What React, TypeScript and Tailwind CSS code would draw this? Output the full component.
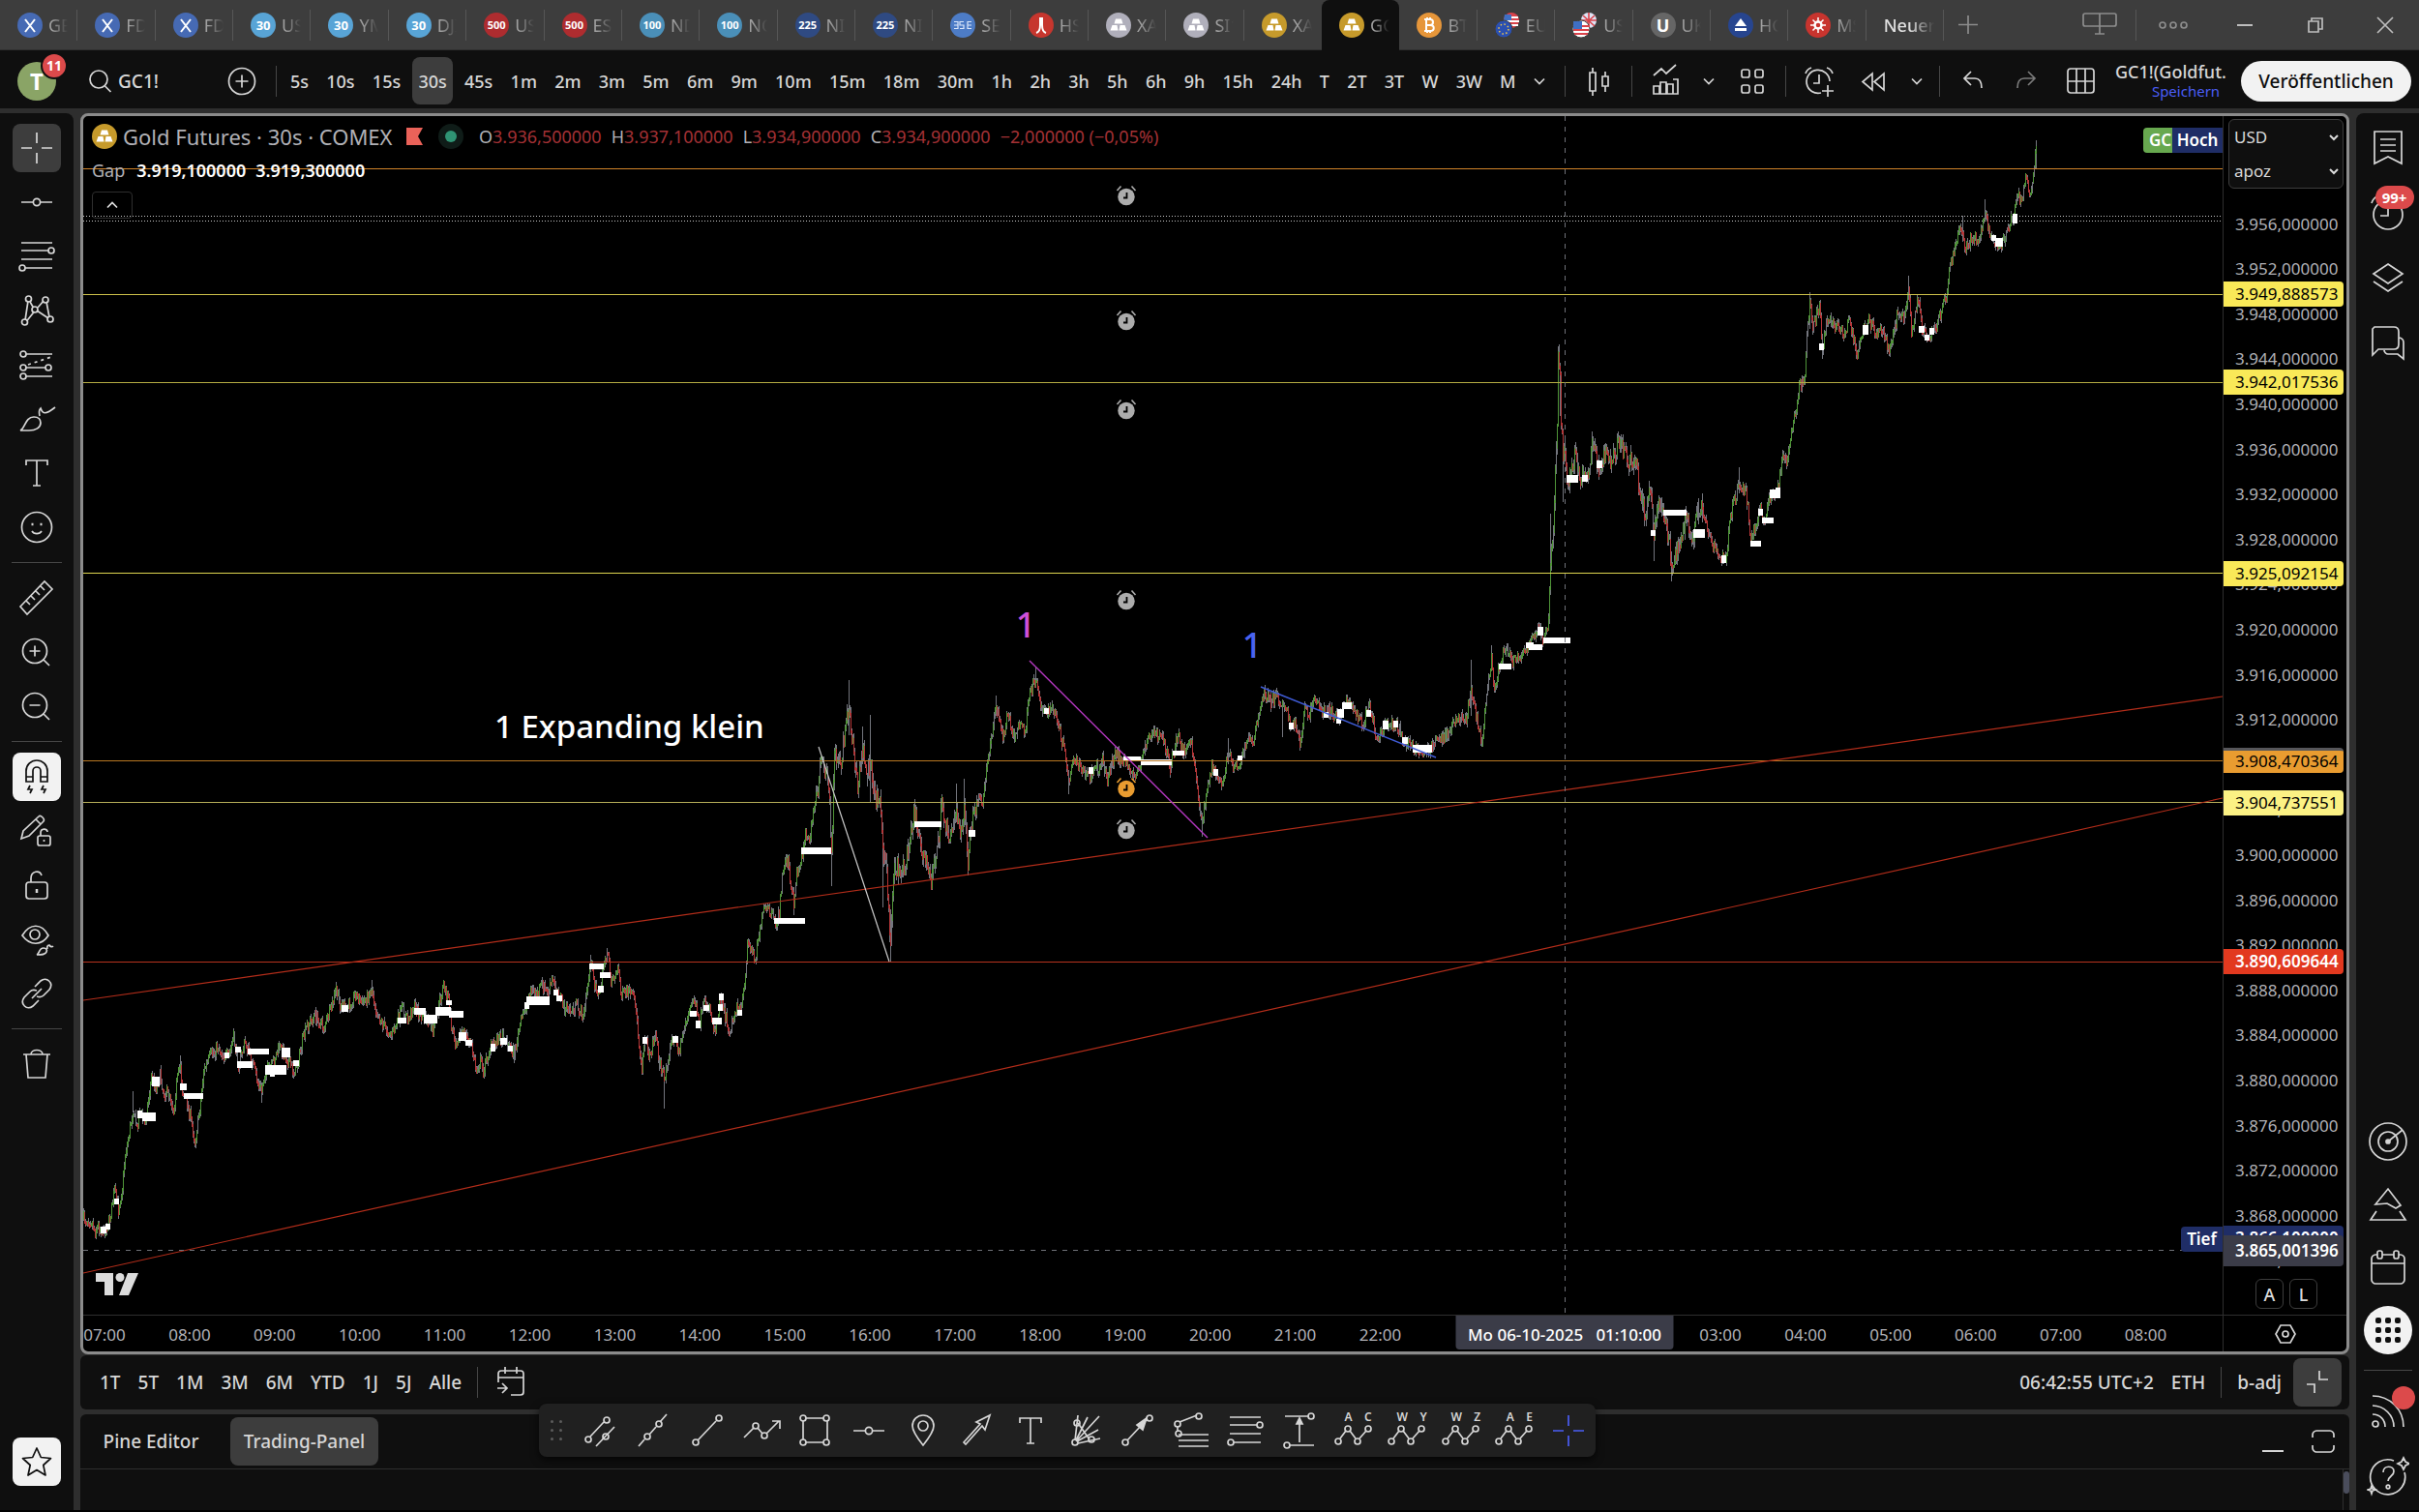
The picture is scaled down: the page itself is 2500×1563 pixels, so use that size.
import type { ReactNode } from 'react';
import clsx from 'clsx';

/* ---------- chart data ---------- */

// canvas window of the pane, in chart units
const PANE = { x: 86, y: 120, w: 2211, h: 1239 };

const topOf = (y: number) => `${((y - PANE.y) / PANE.h) * 100}%`;
const leftOf = (x: number) => `${((x - PANE.x) / PANE.w) * 100}%`;
const priceY = (p: number) => 231.5 + (3956 - p) * 11.65;

// x, y pairs the price walks through
const walk = [
  85, 1260, 94, 1262, 98, 1273, 101, 1267, 107, 1273, 112, 1263, 115, 1250, 118, 1230, 122, 1250, 126, 1227, 129, 1193,
  134, 1167, 137, 1147, 141, 1167, 144, 1147, 149, 1162, 153, 1137, 156, 1113, 161, 1123, 165, 1112, 169, 1130, 175, 1130,
  179, 1148, 182, 1120, 186, 1100, 188, 1127, 193, 1140, 198, 1163, 201, 1180, 206, 1147, 210, 1107, 218, 1090, 225, 1082,
  230, 1090, 236, 1092, 241, 1073, 246, 1100, 253, 1077, 261, 1100, 267, 1123, 270, 1127, 274, 1107, 280, 1103, 288, 1082,
  294, 1090, 303, 1108, 307, 1100, 312, 1077, 317, 1060, 325, 1050, 334, 1062, 342, 1043, 347, 1022, 350, 1037, 358, 1043,
  367, 1027, 374, 1038, 384, 1023, 389, 1047, 396, 1060, 405, 1070, 415, 1043, 421, 1055, 427, 1040, 433, 1048, 441, 1055,
  447, 1067, 453, 1040, 458, 1018, 463, 1033, 466, 1060, 470, 1077, 477, 1067, 486, 1078, 492, 1107, 496, 1097, 499, 1107,
  506, 1083, 514, 1073, 521, 1073, 531, 1090, 537, 1060, 543, 1040, 548, 1023, 555, 1027, 560, 1018, 566, 1028, 570, 1013,
  578, 1028, 583, 1043, 590, 1045, 595, 1040, 603, 1050, 607, 1017, 610, 993, 613, 1013, 619, 1030, 625, 988, 629, 992,
  631, 1013, 639, 1003, 642, 1030, 648, 1025, 656, 1035, 659, 1070, 663, 1103, 666, 1070, 671, 1093, 677, 1067, 681, 1097,
  686, 1117, 690, 1093, 695, 1073, 702, 1085, 708, 1057, 713, 1043, 717, 1033, 722, 1060, 728, 1037, 733, 1040, 738, 1067,
  745, 1027, 749, 1050, 754, 1067, 761, 1037, 765, 1047, 769, 1020, 772, 973, 776, 983, 780, 990, 785, 957, 790, 940,
  797, 945, 801, 957, 805, 943, 809, 897, 814, 887, 816, 913, 820, 933, 823, 903, 828, 887, 832, 860, 836, 870, 841, 833,
  845, 817, 847, 780, 852, 800, 856, 807, 859, 883, 862, 780, 869, 787, 873, 753, 877, 730, 882, 780, 886, 817, 891, 773,
  895, 803, 899, 787, 904, 827, 909, 817, 912, 883, 916, 900, 920, 977, 923, 900, 929, 897, 935, 900, 939, 870, 944, 840,
  949, 860, 954, 883, 962, 910, 967, 887, 973, 833, 980, 863, 988, 843, 992, 867, 996, 833, 1000, 890, 1004, 853,
  1010, 827, 1015, 830, 1020, 790, 1024, 760, 1029, 730, 1036, 763, 1041, 737, 1048, 763, 1054, 747, 1059, 757, 1064, 717,
  1070, 700, 1075, 727, 1081, 740, 1087, 730, 1093, 750, 1099, 773, 1104, 807, 1110, 787, 1115, 793, 1120, 800, 1126, 803,
  1132, 790, 1135, 797, 1138, 783, 1144, 807, 1148, 790, 1153, 780, 1161, 787, 1171, 800, 1177, 797, 1183, 770, 1189, 760,
  1201, 760, 1209, 793, 1217, 760, 1223, 777, 1231, 770, 1235, 797, 1238, 827, 1242, 850, 1246, 820, 1252, 793, 1263, 813,
  1269, 777, 1275, 793, 1282, 787, 1288, 767, 1296, 763, 1301, 737, 1306, 717, 1313, 725, 1319, 720, 1326, 727, 1334, 750,
  1339, 750, 1343, 767, 1348, 733, 1352, 743, 1356, 723, 1361, 723, 1365, 738, 1372, 733, 1383, 743, 1393, 723, 1400, 733,
  1408, 750, 1415, 727, 1422, 763, 1431, 750, 1443, 747, 1450, 767, 1459, 772, 1474, 777, 1485, 767, 1495, 760, 1505, 743,
  1515, 743, 1520, 710, 1525, 740, 1531, 767, 1536, 717, 1541, 680, 1544, 717, 1548, 690, 1556, 669, 1563, 684, 1574, 675,
  1585, 659, 1590, 648, 1595, 662, 1600, 641, 1602, 580, 1605, 551, 1607, 491, 1609, 434, 1610, 373, 1612, 387, 1613, 434,
  1615, 469, 1617, 466, 1619, 501, 1627, 473, 1634, 494, 1641, 487, 1645, 462, 1652, 484, 1659, 469, 1665, 480, 1673, 457,
  1681, 476, 1690, 473, 1694, 512, 1701, 534, 1705, 509, 1709, 548, 1713, 523, 1721, 534, 1727, 584, 1732, 569, 1737, 562,
  1742, 530, 1748, 566, 1753, 534, 1759, 526, 1766, 555, 1774, 573, 1783, 580, 1788, 534, 1792, 516, 1797, 505, 1804, 505,
  1809, 559, 1814, 541, 1819, 526, 1823, 541, 1828, 516, 1837, 505, 1842, 473, 1847, 476, 1850, 451, 1855, 430, 1859, 401,
  1865, 391, 1867, 344, 1870, 312, 1873, 341, 1880, 316, 1883, 362, 1887, 330, 1897, 337, 1904, 344, 1911, 334, 1919, 366,
  1926, 341, 1931, 330, 1938, 344, 1946, 344, 1951, 362, 1955, 351, 1961, 323, 1967, 326, 1972, 301, 1975, 341, 1982, 309,
  1986, 341, 1992, 350, 2000, 341, 2007, 316, 2011, 305, 2015, 276, 2020, 255, 2025, 234, 2031, 259, 2037, 244, 2042, 248,
  2047, 241, 2051, 216, 2056, 244, 2065, 257, 2071, 244, 2076, 234, 2080, 223, 2085, 201, 2089, 212, 2093, 184, 2098, 201,
  2101, 176, 2104, 155,
];

// x, high, low
const spikes = [
  [137, 1128, 1150], [186, 1091, 1110], [270, 1120, 1140], [347, 1016, 1030], [384, 1013, 1030], [610, 987, 1005], [686, 1110, 1146],
  [820, 930, 946], [859, 860, 916], [877, 703, 760], [891, 751, 790], [899, 739, 830], [912, 850, 938], [920, 940, 994],
  [988, 810, 850], [996, 805, 850], [1000, 870, 902], [1029, 719, 740], [1070, 690, 710], [1104, 800, 821], [1242, 840, 865],
  [1269, 763, 790], [1306, 712, 725], [1325, 725, 762], [1343, 755, 776], [1520, 682, 740], [1541, 667, 690], [1602, 531, 590],
  [1610, 358, 420], [1612, 380, 430], [1615, 450, 519], [1645, 446, 480], [1709, 540, 580], [1727, 570, 601], [1759, 510, 540],
  [1797, 483, 510], [1870, 302, 340], [1883, 350, 371], [1972, 285, 310], [2028, 223, 250], [2051, 206, 225], [2104, 145, 175],
];

// x, y, width, height of the open gaps
const gaps = [
  [104, 1268, 6, 7], [109, 1265, 5, 6], [118, 1239, 5, 6], [142, 1148, 5, 8], [147, 1150, 14, 9], [157, 1113, 8, 10],
  [186, 1120, 7, 7], [190, 1130, 20, 6], [232, 1088, 5, 6], [243, 1082, 6, 6], [245, 1097, 16, 7], [256, 1084, 22, 6],
  [274, 1101, 22, 10], [279, 1110, 5, 3], [291, 1083, 9, 10], [303, 1096, 6, 6], [353, 1039, 7, 7], [411, 1052, 9, 6],
  [428, 1042, 12, 7], [438, 1049, 14, 9], [450, 1041, 16, 9], [461, 1034, 6, 5], [464, 1045, 15, 7], [474, 1067, 8, 9],
  [481, 1075, 7, 6], [507, 1079, 5, 8], [517, 1073, 7, 7], [525, 1081, 5, 6], [542, 1036, 5, 7], [544, 1030, 24, 9],
  [572, 1023, 5, 6], [575, 1029, 6, 6], [609, 996, 15, 6], [620, 1005, 11, 6], [618, 1019, 6, 7], [664, 1072, 5, 7],
  [695, 1071, 6, 7], [713, 1045, 7, 6], [719, 1055, 5, 8], [727, 1039, 6, 6], [736, 1052, 10, 7], [742, 1038, 5, 7],
  [743, 1027, 5, 7], [762, 1044, 5, 6], [800, 949, 32, 6], [828, 876, 31, 7], [945, 849, 28, 6], [1001, 858, 7, 7],
  [1079, 732, 5, 6], [1125, 793, 5, 7], [1161, 782, 18, 5], [1179, 785, 32, 6], [1212, 776, 12, 5], [1254, 795, 5, 7],
  [1279, 781, 5, 6], [1332, 747, 5, 7], [1368, 736, 5, 6], [1382, 733, 7, 9], [1381, 743, 5, 5], [1387, 726, 10, 7],
  [1412, 734, 5, 7], [1429, 745, 6, 9], [1440, 745, 5, 7], [1449, 762, 6, 7], [1460, 770, 20, 8], [1549, 686, 13, 6],
  [1577, 664, 8, 6], [1580, 666, 14, 6], [1589, 648, 6, 9], [1595, 659, 28, 6], [1619, 491, 12, 8], [1635, 491, 6, 7],
  [1650, 476, 6, 8], [1706, 548, 5, 6], [1719, 527, 24, 6], [1750, 547, 12, 9], [1779, 574, 5, 8], [1809, 559, 11, 6],
  [1817, 526, 5, 7], [1821, 535, 12, 6], [1829, 506, 11, 9], [1835, 504, 5, 4], [1880, 355, 5, 7], [1925, 336, 6, 10],
  [1983, 337, 6, 7], [1989, 346, 5, 6], [1994, 339, 5, 7], [2058, 243, 5, 6], [2062, 246, 8, 9], [2080, 221, 5, 10],
];

function buildCandles() {
  let seed = 7;
  const rnd = () => {
    seed = (seed * 16807) % 2147483647;
    return seed / 2147483647;
  };
  const out = { wick: '', up: '', down: '' };
  let prev = walk[1];
  let i = 0;
  for (let x = 86; x <= 2104; x++) {
    while (i < walk.length - 4 && walk[i + 2] < x) i += 2;
    const t = (x - walk[i]) / (walk[i + 2] - walk[i]);
    const base = walk[i + 1] + (walk[i + 3] - walk[i + 1]) * t;
    const wild = (x > 840 && x < 1010) || (x > 1600 && x < 1760) ? 1.8 : 1.1;
    const y = base + (rnd() - 0.5) * 11 * wild;
    const hi = Math.min(prev, y) - rnd() * 5 * wild;
    const lo = Math.max(prev, y) + rnd() * 5 * wild;
    out.wick += `M${x + 0.5} ${hi.toFixed(0)}V${lo.toFixed(0)}`;
    if (rnd() > 0.15) {
      out[y < prev ? 'up' : 'down'] += `M${x + 0.5} ${(prev + (y < prev ? 1 : -1)).toFixed(0)}V${(y + (y < prev ? -2 : 2)).toFixed(0)}`;
    }
    prev = y;
  }
  spikes.forEach(([x, a, b]) => (out.wick += `M${x + 0.5} ${a}V${b}`));
  return out;
}

const candles = buildCandles();

const levels = [
  { y: 174, color: '#d18429' },
  { y: 304, color: '#ccc04a' },
  { y: 395, color: '#b5ac42' },
  { y: 592, color: '#dfd550' },
  { y: 786, color: '#b87722' },
  { y: 829, color: '#b5ad58' },
  { y: 994, color: '#b8321e' },
];

const ticks = Array.from({ length: 24 }, (_, i) => 3956 - i * 4);

const tags = [
  { price: 3949.888573, cls: 'bg-[#f9e958] text-black' },
  { price: 3942.017536, cls: 'bg-[#f9e958] text-black' },
  { price: 3925.092154, cls: 'bg-[#f9e958] text-black' },
  { price: 3908.470364, cls: 'border-t-3 border-[#56565a] bg-[#e99c30] pb-px text-black' },
  { price: 3904.737551, cls: 'bg-[#fbf184] text-black' },
  { price: 3890.609644, cls: 'bg-[#e2391f] font-semibold text-white' },
  { price: 3866.1, cls: 'bg-[#1f2d66] font-semibold text-white' },
];

const hours = [
  '07:00', '08:00', '09:00', '10:00', '11:00', '12:00', '13:00', '14:00', '15:00', '16:00', '17:00', '18:00', '19:00',
  '20:00', '21:00', '22:00', '', '', '', '03:00', '04:00', '05:00', '06:00', '07:00', '08:00',
];

const fmt = (p: number) => {
  const [int, dec] = p.toFixed(6).split('.');
  return `${int[0]}.${int.slice(1)},${dec}`;
};

/* ---------- icons ---------- */

function Ico({ children, className = '' }: { children: ReactNode; className?: string }) {
  return (
    <svg viewBox="0 0 44 44" className={clsx('h-11 w-11 shrink-0', className)} fill="none" stroke="currentColor" strokeWidth="1.7" aria-hidden="true">
      {children}
    </svg>
  );
}

const dot = (x: number, y: number, r = 3) => <circle key={`${x}-${y}`} cx={x} cy={y} r={r} />;

const Chevron = () => (
  <svg viewBox="0 0 14 10" className="h-2.5 w-3.5" fill="none" stroke="currentColor" strokeWidth="1.7" aria-hidden="true">
    <path d="M2 2.5l5 5 5-5" />
  </svg>
);

const icons: Record<string, ReactNode> = {
  cross: <path d="M6 22h11M27 22h11M22 6v11M22 27v11" />,
  hline: <><path d="M6 22h12M26 22h12" />{dot(22, 22, 3.6)}</>,
  fib: <><path d="M6 8h32M6 16h28M6 25h32M10 34h28" />{dot(37, 16)}{dot(7, 34)}</>,
  pattern: <><path d="M13 12l-3 20M15 13l3.500 6M11.500 33l8-10M23 19l6-7M32 13l3 16M34 30l-12-8" />{dot(13.5, 10)}{dot(31, 11)}{dot(9.500, 34)}{dot(36, 31)}{dot(20, 21)}</>,
  forecast: <><path d="M11 11h27M11 25h20M11 34h27" /><path d="M13 22l24-8" strokeDasharray="3 4" />{dot(8, 11)}{dot(8, 25)}{dot(8, 34)}{dot(34, 25)}</>,
  brush: <><path d="M5 34c5-2 5-14 14-14 5 0 7 3 7 6 0 5-5 8-12 8z" /><path d="M25 19c-1-4-1-6 1-8 2 6 5 7 15-1" /></>,
  text: <path d="M11 14V9h22v5M22 9v26M18 35h8" />,
  smile: <><circle cx="22" cy="22" r="15.500" /><path d="M17 26c2 3.500 8 3.500 10 0" /><path d="M16.500 19h2M25.500 19h2" strokeWidth="2.5" /></>,
  ruler: <path d="M5 31L30 5l8 8-26 26zM11 25l4 4M16 20l4 4M21 15l4 4M26 10l4 4" />,
  zoomIn: <><circle cx="20" cy="21" r="12.500" /><path d="M29 30l6 6M20 15.500v11M14.500 21h11" /></>,
  zoomOut: <><circle cx="20" cy="21" r="12.500" /><path d="M29 30l6 6M14.500 21h11" /></>,
  magnet: <><path d="M11 27V16a11 11 0 0 1 22 0v11h-7V16a4 4 0 0 0-8 0v11zM11 22h7M26 22h7" /><path d="M15 31l-2 4h4l-2 4M29 31l-2 4h4l-2 4" /></>,
  pencilLock: <><path d="M6 30l2-8L24 7c2-2 7 3 5 5L14 27zM21 10l5 5" /><rect x="23" y="27" width="13" height="10" rx="2" /><path d="M26 27v-3c0-5 7-5 7-1M29.500 31v2" /></>,
  lock: <><rect x="11" y="19" width="22" height="17" rx="3" /><path d="M16 19v-4c0-8 9-9 11-3" /><path d="M22 26v4" strokeWidth="2.5" /></>,
  eye: <><path d="M7 18c8-13 20-13 27 0-7 11-19 11-27 0z" /><circle cx="20" cy="17" r="5" /><path d="M22 38c3-1 2-7 7-7 3 0 4 2 3 4-1 3-5 3-10 3zM33 32c-1-3 1-4 2-4 1 2 3 2 4 1" /></>,
  link: <path d="M20 15l6-6c6-5 14 2 9 9l-6 6c-2 2-4 2-7 1M24 29l-6 6c-6 5-14-2-9-9l6-6c2-2 4-2 7-1M17 27L27 17" />,
  trash: <path d="M8 12h28M16 12c0-6 12-6 12 0M11 12l2 24h18l2-24" />,
  star: <path d="M22 8l4.300 9.500 10.200 1-7.700 7 2.200 10.500-9-5.500-9 5.500 2.200-10.500-7.700-7 10.200-1z" strokeLinejoin="round" />,
  search: <><circle cx="20" cy="20" r="9" /><path d="M26.500 27l6 6" /></>,
  plusCircle: <><circle cx="22" cy="22" r="13.500" /><path d="M22 15.500v13M15.500 22h13" /></>,
  candle: <path d="M13 13h6v19h-6zM16 8v5M16 32v5M26 17h6v10h-6zM29 12v5M29 27v6" />,
  indicators: <path d="M10 16l8-7 5 5 10-9M10 27h6v8h-6zM17 23h6v12h-6zM24 25h6v10h-6zM30 20h5v15h-5" />,
  squares: <><rect x="11" y="10" width="8" height="8" rx="2" /><rect x="25" y="10" width="8" height="8" rx="2" /><rect x="11" y="26" width="8" height="8" rx="2" /><rect x="25" y="26" width="8" height="8" rx="2" /></>,
  alarmPlus: <><path d="M33 22a12 12 0 1 0-9 12M22 15v9h-6M8 14c1-3 3-5 6-6M36 14c-1-3-3-5-6-6M31 26v12M25 32h12" /></>,
  rewind: <path d="M21 14v17l-10-8.500zM33 14v17l-10-8.500z" />,
  undo: <path d="M20 12l-7 7 7 7M14 19h10c5 0 7 4 7 10" />,
  redo: <path d="M24 12l7 7-7 7M30 19H20c-5 0-7 4-7 10" />,
  layout: <><rect x="8" y="9" width="27" height="25" rx="3" /><path d="M17 9v25M26 9v25M8 22h27" /></>,
  list: <path d="M8 5h28v33l-14-7-14 7zM14 13h16M14 19h16M14 25h16" />,
  alarm: <><circle cx="22" cy="24" r="15" /><path d="M22 15v10h-8M5 12c1-3 3-6 6-7" /></>,
  layers: <path d="M22 8l15 10-15 10L7 18zM7 26l15 10 15-10" />,
  chat: <path d="M8 6h20c3 0 5 2 5 5v13c0 3-2 5-5 5H12l-6 6V8zM34 17c3 1 4 3 4 5v17l-6-5H22c-2 0-4-2-4-4" />,
  radar: <><circle cx="22" cy="22" r="19" /><circle cx="22" cy="22" r="10" /><circle cx="22" cy="22" r="2" fill="currentColor" /><path d="M22 22L37 10" /></>,
  peak: <path d="M9 22L22 6l13 17-5 3-9-5zM10 29l-6 9h36l-6-9" />,
  calendar: <><path d="M11 9H9c-2 0-4 2-4 4v22c0 2 2 4 4 4h26c2 0 4-2 4-4V13c0-2-2-4-4-4h-2M16 9h12M5 18h34" /><rect x="11" y="5" width="5" height="8" rx="2" /><rect x="28" y="5" width="5" height="8" rx="2" /></>,
  rss: <><path d="M6 6c18 0 32 14 32 32M6 16c12 0 22 10 22 22M6 25c8 0 13 6 13 13" />{dot(9, 35)}</>,
  help: <><path d="M28 5a18 18 0 1 0 11 12M17 17c0-8 11-7 11-1 0 5-6 5-6 10" />{dot(22, 32, 1.800)}<path d="M38 2l2 4 4 2-4 2-2 4-2-4-4-2 4-2zM5 31l1 3 3 1-3 1-1 3-1-3-3-1 3-1z" fill="#0f0f0f" /></>,
  goto: <path d="M9 22v-9c0-2 1-3 3-3h20c2 0 3 1 3 3v19c0 2-1 3-3 3H22M9 17h26M16 6v7M28 6v7M8 28h9M13 23l5 5-5 5" />,
  collapse: <path d="M24 10v9h9M11 24h8v9" />,
  maximize: <path d="M11 18v-3c0-2 2-4 4-4h14c2 0 4 2 4 4v3M11 26v3c0 2 2 4 4 4h14c2 0 4-2 4-4v-3" />,
  minimize: <path d="M11 32h22" strokeWidth="2" />,
  hexagon: <><path d="M17 13h10l5 9-5 9H17l-5-9z" /><circle cx="22" cy="22" r="3" /></>,
};

const drawTools: [string, ReactNode][] = [
  ['Paralleler Kanal', <><path d="M12 28L26 13M18 38l19-20" />{dot(10, 31)}{dot(29, 11)}{dot(28, 28)}</>],
  ['Erweiterte Linie', <><path d="M7 38l6-7M18 26l7-8M29 13l7-8" />{dot(16, 28)}{dot(28, 15)}</>],
  ['Trendlinie', <><path d="M12 32L31 12" />{dot(10, 34)}{dot(34, 9)}</>],
  ['Pfad', <><path d="M4 29l10-10M18 19l5 6M27 25L40 12M33 12h8v8" />{dot(16, 17)}{dot(25, 27)}</>],
  ['Rechteck', <><path d="M13 9h18M35 12v19M31 34H13M10 31V12" />{dot(10, 9)}{dot(34, 9)}{dot(10, 34)}{dot(34, 34)}</>],
  ['Horizontale Linie', icons.hline],
  ['Nadel', <><path d="M22 37C14 27 11 21 11 17a11 11 0 0 1 22 0c0 4-3 10-11 20z" /><circle cx="22" cy="17" r="5" /></>],
  ['Pfeilmarker', <path d="M9 34l17-19-4-2 14-7-5 15-3-4-17 19z" />],
  ['Text', icons.text],
  ['Gann-Fächer', <><path d="M13 32L16 6M14 32L26 8M14 33L38 7M15 33l22-12M16 35l23-5M16 14l12 17" />{dot(13, 34)}{dot(15, 14)}{dot(30, 31)}</>],
  ['Pfeil', <><path d="M11 32l14-15M31 9l-10 7 6 5z" fill="currentColor" />{dot(9, 34)}{dot(34, 9)}</>],
  ['Fib-Extension', <><path d="M9 13l18-7M7 17v6M8 26h31M8 32h31M8 38h31" />{dot(7, 15)}{dot(29, 7)}{dot(8, 25)}</>],
  ['Fib-Retracement', icons.fib],
  ['Preisspanne', <><path d="M7 7h25M11 37h26M22 34V13" /><path d="M22 9l-3 6h6z" fill="currentColor" />{dot(34, 7)}{dot(9, 37)}</>],
];

const waveTools = ['A C', 'W Y', 'W Z', 'A E'];

const sideGroups = [
  [['Fadenkreuz', 'cross'], ['Linien', 'hline'], ['Fibonacci', 'fib'], ['Muster', 'pattern'], ['Prognose', 'forecast'], ['Pinsel', 'brush'], ['Text', 'text'], ['Symbole', 'smile']],
  [['Messen', 'ruler'], ['Vergrößern', 'zoomIn'], ['Verkleinern', 'zoomOut']],
  [['Magnet', 'magnet'], ['Zeichenmodus', 'pencilLock'], ['Sperren', 'lock'], ['Ausblenden', 'eye'], ['Verknüpfen', 'link']],
  [['Löschen', 'trash']],
];

/* ---------- tab bar ---------- */

const bars = <path d="M10 6.500h6l1.500 5h-9zM6.500 13h5l1 5.500H4.500zM14.500 13h5l2 5.500h-8z" fill="#fff" />;

type Tab = { label: string; bg: string; mark?: string; art?: ReactNode };

const flags = (a: string, b: string, usFront: boolean) => (
  <>
    <circle cx="17" cy="8" r="8" fill={b} />
    {usFront ? (
      <path d="M9 8h16M17 0v16M11 3l12 11M23 3L11 14" stroke="#d9434b" strokeWidth="1.6" />
    ) : (
      <>
        <path d="M10 5h14M9 9h16M10 13h14" stroke="#fff" strokeWidth="2" />
        <path d="M10 2h7v6H9z" fill="#3f6fc4" />
      </>
    )}
    <circle cx="9" cy="17" r="9" fill={a} stroke="#3d3d3d" strokeWidth="1" />
    {usFront ? (
      <>
        <path d="M1 18h16M2 22h14M9 14h9" stroke="#d9434b" strokeWidth="2" />
        <path d="M1 9h9v8H1z" fill="#3f6fc4" />
      </>
    ) : (
      <circle cx="9" cy="17" r="5" fill="none" stroke="#f2c94c" strokeWidth="1.5" strokeDasharray="1.500 2.400" />
    )}
  </>
);

const tabs: Tab[] = [
  { label: 'GER', bg: 'bg-[#466ab4]', art: <path d="M8 7l10 13M18 7L8 20" stroke="#fff" strokeWidth="2" /> },
  { label: 'FDX', bg: 'bg-[#466ab4]', art: <path d="M8 7l10 13M18 7L8 20" stroke="#fff" strokeWidth="2" /> },
  { label: 'FDX', bg: 'bg-[#466ab4]', art: <path d="M8 7l10 13M18 7L8 20" stroke="#fff" strokeWidth="2" /> },
  { label: 'US3', bg: 'bg-[#58a4d6]', mark: '30' },
  { label: 'YM1', bg: 'bg-[#58a4d6]', mark: '30' },
  { label: 'DJI', bg: 'bg-[#58a4d6]', mark: '30' },
  { label: 'US5', bg: 'bg-[#ae2c2f]', mark: '500' },
  { label: 'ES1', bg: 'bg-[#ae2c2f]', mark: '500' },
  { label: 'NDX', bg: 'bg-[#4a8fb8]', mark: '100' },
  { label: 'NQ1', bg: 'bg-[#4a8fb8]', mark: '100' },
  { label: 'NI2', bg: 'bg-[#2f4a82]', mark: '225' },
  { label: 'NIY', bg: 'bg-[#2f4a82]', mark: '225' },
  { label: 'SEN', bg: 'bg-[#4d7cc6]', art: <path d="M4 9.500h4v7H4M4 13h4M14 9.500h-4v3.500h4v3.500h-4M22 9.500h-4v7h4M18 13h4" stroke="#dbe7fb" strokeWidth="1.2" /> },
  { label: 'HSI', bg: 'bg-[#c6362e]', art: <path d="M12 5v8c0 4-1 7-4 8M14 5v8c0 4 1 7 4 8" stroke="#fff" strokeWidth="2" /> },
  { label: 'XAG', bg: 'bg-[#b0afbb]', art: bars },
  { label: 'SI1', bg: 'bg-[#b0afbb]', art: bars },
  { label: 'XAU', bg: 'bg-[#c69a2b]', art: bars },
  { label: 'GC1', bg: 'bg-[#c69a2b]', art: bars },
  { label: 'BTC', bg: 'bg-[#e6963a]', art: <path d="M10 7v12M8 7h6c4 0 4 6 0 6h-4M14 13c5 0 5 6 0 6H8M11 5v2M14 5v2M11 19v2M14 19v2" stroke="#fff" strokeWidth="2" /> },
  { label: 'EUR', bg: '', art: flags('#2b50b0', '#d9434b', false) },
  { label: 'USD', bg: '', art: flags('#fff', '#dfe3f5', true) },
  { label: 'UKO', bg: 'bg-[#666]', mark: 'U' },
  { label: 'HG1', bg: 'bg-[#27458f]', art: <path d="M13 6l6 8H7zM7 16h12v3H7z" fill="#fff" /> },
  { label: 'MSC', bg: 'bg-[#c8342e]', art: <><circle cx="13" cy="13" r="3.500" stroke="#fff" strokeWidth="2.5" /><path d="M13 5v4M13 17v4M5 13h4M17 13h4M7.500 7.500l3 3M15.500 15.500l3 3M18.500 7.500l-3 3M7.500 18.500l3-3" stroke="#fff" strokeWidth="1.5" /></> },
];

function TabIcon({ tab }: { tab: Tab }) {
  return (
    <span
      className={clsx(
        'flex h-[26px] w-[26px] shrink-0 items-center justify-center rounded-full font-bold text-white',
        tab.bg,
        tab.mark === 'U' ? 'text-lg' : tab.mark && tab.mark.length === 3 ? 'text-[11px]' : 'text-[13px]',
      )}
    >
      {tab.mark ?? (
        <svg viewBox="0 0 26 26" className="h-[26px] w-[26px]" fill="none" aria-hidden="true">
          {tab.art}
        </svg>
      )}
    </span>
  );
}

function TabBar() {
  return (
    <header className="flex h-[52px] shrink-0 border-b border-[#303030] bg-[#3d3d3d]">
      <nav className="flex min-w-0 flex-1">
        {tabs.map((tab, i) => (
          <button
            key={i}
            className={clsx(
              'relative flex min-w-0 flex-1 items-center gap-1.5 overflow-hidden pl-[18px] text-[#a0a0a0]',
              i === 17 && 'h-[52px] rounded-t-lg bg-[#0f0f0f]',
            )}
          >
            <TabIcon tab={tab} />
            <span className="w-5 overflow-hidden [mask-image:linear-gradient(90deg,#000_20%,transparent)]">{tab.label}</span>
            {i !== 16 && i !== 17 && <span className="absolute top-2.5 right-0 h-8 w-px bg-[#565656]" />}
          </button>
        ))}
        <button className="relative flex min-w-0 flex-1 items-center pl-[18px] font-medium text-[#e0e0e0]">
          <span className="w-13 overflow-hidden whitespace-nowrap [mask-image:linear-gradient(90deg,#000_50%,transparent)]">Neuer Tab</span>
          <span className="absolute top-2.5 right-0 h-8 w-px bg-[#565656]" />
        </button>
      </nav>
      <div className="flex w-[491px] shrink-0 items-center text-[#8c8c8c]">
        <button aria-label="Neuer Tab" className="flex w-[50px] justify-center">
          <Ico><path d="M22 12v19M12 21.500h20" /></Ico>
        </button>
        <button aria-label="Layouts" className="ml-auto flex w-[74px] justify-center">
          <Ico><path d="M5 12c0-1 1-2 2-2h30c1 0 2 1 2 2v9c0 1-1 2-2 2H7c-1 0-2-1-2-2zM22 10v21M17 31h10" /></Ico>
        </button>
        <span className="h-8 w-px bg-[#565656]" />
        <button aria-label="Menü" className="flex w-[76px] justify-center">
          <Ico>{dot(11, 22)}{dot(22, 22)}{dot(33, 22)}</Ico>
        </button>
        <button aria-label="Minimieren" className="flex w-[72px] justify-center text-[#bdbdbd]">
          <Ico><path d="M14 22h16" strokeWidth="2" /></Ico>
        </button>
        <button aria-label="Wiederherstellen" className="flex w-[74px] justify-center text-[#bdbdbd]">
          <Ico><path d="M15 18h10v11H15zM18 18v-3h11v11h-4" /></Ico>
        </button>
        <button aria-label="Schließen" className="flex w-[70px] justify-center text-[#bdbdbd]">
          <Ico><path d="M14 14l16 16M30 14L14 30" /></Ico>
        </button>
      </div>
    </header>
  );
}

/* ---------- toolbar ---------- */

const intervals = [
  '5s', '10s', '15s', '30s', '45s', '1m', '2m', '3m', '5m', '6m', '9m', '10m', '15m', '18m', '30m', '1h', '2h', '3h', '5h',
  '6h', '9h', '15h', '24h', 'T', '2T', '3T', 'W', '3W', 'M',
];

const Sep = () => <span className="h-8 w-px shrink-0 bg-[#464646]" />;

function Tool({ name, label, className }: { name: string; label: string; className: string }) {
  return (
    <button aria-label={label} className={clsx('flex shrink-0 items-center justify-center', className)}>
      <Ico>{icons[name]}</Ico>
    </button>
  );
}

function Toolbar() {
  return (
    <div className="flex h-[60px] shrink-0 items-center bg-[#0f0f0f] pt-[3px]">
      <button className="relative ml-[18px] flex h-10 w-10 items-center justify-center rounded-full bg-[#8aa466] text-2xl font-bold text-white">
        T
        <span className="absolute -top-2.5 -right-3 flex h-7 w-7 items-center justify-center rounded-full border-2 border-[#0f0f0f] bg-[#dc4a4b] text-sm">11</span>
      </button>
      <button className="ml-[24px] flex w-[146px] items-center">
        <Ico>{icons.search}</Ico>
        <span className="-ml-1 text-[19px] font-medium">GC1!</span>
      </button>
      <Tool name="plusCircle" label="Symbol vergleichen" className="w-11" />
      <span className="w-[13px]" />
      <Sep />
      <nav className="flex flex-1 justify-between pr-1.5 pl-2 font-medium">
        {intervals.map((it) => (
          <button key={it} className={clsx('h-[49px] rounded-lg px-1.5', it === '30s' && 'bg-[#3d3d3d]')}>
            {it}
          </button>
        ))}
      </nav>
      <button aria-label="Mehr Intervalle" className="mr-3.5 flex w-[24px] justify-center"><Chevron /></button>
      <Sep />
      <Tool name="candle" label="Kerzen" className="w-[68px]" />
      <Sep />
      <Tool name="indicators" label="Indikatoren" className="w-[68px]" />
      <button aria-label="Favoriten" className="flex w-[22px] justify-center"><Chevron /></button>
      <Tool name="squares" label="Vorlagen" className="w-[68px]" />
      <Sep />
      <Tool name="alarmPlus" label="Alarm" className="w-[68px]" />
      <Tool name="rewind" label="Replay" className="w-[44px]" />
      <button aria-label="Replay-Optionen" className="flex w-[46px] justify-center"><Chevron /></button>
      <Sep />
      <Tool name="undo" label="Rückgängig" className="w-[68px]" />
      <Tool name="redo" label="Wiederholen" className="w-[42px] text-[#7a7a7a]" />
      <Tool name="layout" label="Layout" className="w-[71px]" />
      <button className="flex w-[130px] flex-col items-center overflow-hidden leading-5">
        <span className="w-full overflow-hidden text-left font-medium whitespace-nowrap">GC1!(Goldfut.</span>
        <span className="pl-4 text-[15px] text-[#4a5df5]">Speichern</span>
      </button>
      <button className="mr-2 h-[42px] w-[176px] shrink-0 rounded-full bg-[#f2f2f2] text-[19px] font-medium text-[#0f0f0f]">Veröffentlichen</button>
    </div>
  );
}

function LeftBar() {
  return (
    <aside className="flex w-[76px] shrink-0 flex-col items-center rounded-tr-lg bg-[#0f0f0f] pt-2">
      {sideGroups.map((group, g) => (
        <div key={g} className="flex flex-col items-center">
          {g > 0 && <span className="my-2 h-px w-[52px] bg-[#464646]" />}
          {group.map(([label, name]) => (
            <div key={name} className="flex h-14 items-center">
              <button
                aria-label={label}
                className={clsx(
                  'flex h-[50px] w-[50px] items-center justify-center rounded-lg',
                  name === 'cross' && 'bg-[#3d3d3d]',
                  name === 'magnet' && 'bg-[#f2f2f2] text-[#0f0f0f]',
                )}
              >
                <Ico>{icons[name]}</Ico>
              </button>
            </div>
          ))}
        </div>
      ))}
      <button aria-label="Favoriten-Leiste" className="mt-auto mb-[25px] flex h-[50px] w-[50px] items-center justify-center rounded-lg bg-[#f2f2f2] text-[#0f0f0f]">
        <Ico>{icons.star}</Ico>
      </button>
    </aside>
  );
}

function RightBar() {
  return (
    <aside className="flex w-[65px] shrink-0 flex-col items-center rounded-tl-lg bg-[#0f0f0f] pt-0.5">
      <Tool name="list" label="Watchlist" className="h-[67px]" />
      <div className="relative">
        <Tool name="alarm" label="Alarme" className="h-[67px]" />
        <span className="absolute top-1.5 left-[9px] flex h-6 w-10 items-center justify-center rounded-full bg-[#dc4a4b] text-[15px] font-bold text-white">99+</span>
      </div>
      <Tool name="layers" label="Objektbaum" className="h-[67px]" />
      <Tool name="chat" label="Chats" className="h-[67px]" />
      <div className="mt-auto flex flex-col items-center">
        <Tool name="radar" label="Screener" className="h-[65px]" />
        <Tool name="peak" label="Pine" className="h-[65px]" />
        <Tool name="calendar" label="Kalender" className="h-[65px]" />
        <button aria-label="Produkte" className="mt-2 mb-1.5 grid h-[50px] w-[50px] grid-cols-[6px_6px_6px] place-content-center gap-1 rounded-full bg-[#f2f2f2]">
          {Array.from({ length: 9 }, (_, i) => (
            <span key={i} className="h-1.5 w-1.5 rounded-xs bg-[#0f0f0f]" />
          ))}
        </button>
        <span className="mt-2.5 mb-2 h-px w-[50px] bg-[#464646]" />
        <div className="relative">
          <Tool name="rss" label="News" className="h-[68px]" />
          <span className="absolute top-2 left-[26px] h-6 w-6 rounded-full bg-[#dc4a4b]" />
        </div>
        <Tool name="help" label="Hilfe" className="h-[68px]" />
      </div>
    </aside>
  );
}

/* ---------- chart ---------- */

function AlertClock({ y, color }: { y: number; color: string }) {
  return (
    <svg viewBox="0 0 24 24" className="absolute h-6 w-6 -translate-x-1/2 -translate-y-1/2" style={{ left: leftOf(1164), top: topOf(y - 1), color }} aria-hidden="true">
      <circle cx="12" cy="13.500" r="8.700" fill="currentColor" />
      <path d="M2.500 7l4-4.500M21.500 7l-4-4.500" stroke="currentColor" strokeWidth="1.6" />
      <path d="M12.500 9v5.500H9" fill="none" stroke="#000" strokeWidth="1.8" />
    </svg>
  );
}

function Ohlc() {
  return (
    <div className="flex items-center gap-2.5 text-[#b1b1b6]">
      {[['O', '3.936,500000'], ['H', '3.937,100000'], ['L', '3.934,900000'], ['C', '3.934,900000']].map(([k, v]) => (
        <span key={k}>
          {k}
          <span className="text-[#a43135]">{v}</span>
        </span>
      ))}
      <span className="text-[#a43135]">−2,000000 (−0,05%)</span>
    </div>
  );
}

function Legend() {
  return (
    <div className="absolute top-[6px] left-[9px]">
      <div className="flex h-[30px] items-center">
        <TabIcon tab={tabs[17]} />
        <h1 className="ml-1.5 w-[292px] text-[22px] whitespace-nowrap text-[#b1b1b6]">Gold Futures · 30s · COMEX</h1>
        <svg viewBox="0 0 18 18" className="h-[18px] w-[18px]" aria-hidden="true">
          <path d="M1 0h17l-5 9 5 9H1z" fill="#ea6259" />
        </svg>
        <span className="mx-4 flex h-[26px] w-[26px] items-center justify-center rounded-full bg-[#0f1c18]">
          <span className="h-3 w-3 rounded-full bg-[#2f9474]" />
        </span>
        <Ohlc />
      </div>
      <div className="mt-[5px] flex h-[30px] items-center font-semibold text-white">
        <span className="mr-3 font-normal text-[#b1b1b6]">Gap</span>
        <span className="mr-2.5">3.919,100000</span>
        <span>3.919,300000</span>
      </div>
      <button aria-label="Legende einklappen" className="mt-[7px] flex h-7 w-[42px] rotate-180 items-center justify-center rounded-sm border border-[#2e2e2e] text-[#e0e0e0]">
        <Chevron />
      </button>
    </div>
  );
}

function Pane() {
  return (
    <div className="relative min-w-0 flex-1 overflow-hidden">
      <svg viewBox={`${PANE.x} ${PANE.y} ${PANE.w} ${PANE.h}`} preserveAspectRatio="none" className="absolute inset-0 h-full w-full" fill="none" aria-label="Gold Futures Kursverlauf">
        <g shapeRendering="crispEdges">
          {[223, 228].map((y) => (
            <path key={y} d={`M86 ${y + 0.5}H2297`} stroke="#c4c4c4" strokeDasharray="1 2" />
          ))}
          <path d={candles.wick} stroke="#73757d" />
          <path d={candles.up} stroke="#4f9438" />
          <path d={candles.down} stroke="#b53638" />
          {gaps.map(([x, y, w, h], i) => (
            <rect key={i} x={x} y={y} width={w} height={h} fill="#fff" />
          ))}
          {levels.map((l) => (
            <path key={l.y} d={`M86 ${l.y + 0.5}H2297`} stroke={l.color} />
          ))}
        </g>
        <path d="M86 1034L2297 720M86 1316L2297 825" stroke="#b32d1a" strokeWidth="1.2" />
        <path d="M1064 683l184 183" stroke="#b437c0" strokeWidth="1.4" />
        <path d="M1303 710l181 73" stroke="#3f5bd6" strokeWidth="1.4" />
        <path d="M846 772l73 222" stroke="#c9c9c9" strokeWidth="1.2" />
        <path d="M1617.500 120V1359M86 1292.500H2297" stroke="#6f7178" strokeDasharray="5 6" shapeRendering="crispEdges" />
      </svg>

      {[203, 332, 424, 621, 858].map((y) => (
        <AlertClock key={y} y={y} color="#acacac" />
      ))}
      <AlertClock y={815} color="#e99c30" />

      <span className="absolute -translate-y-1/2 text-[33px] leading-none font-medium whitespace-nowrap text-white" style={{ left: leftOf(511), top: topOf(750) }}>1 Expanding klein</span>
      <span className="absolute -translate-x-1/2 -translate-y-1/2 text-4xl leading-none font-medium text-[#cf4fd8]" style={{ left: leftOf(1060), top: topOf(646) }}>1</span>
      <span className="absolute -translate-x-1/2 -translate-y-1/2 text-4xl leading-none font-medium text-[#4a63f0]" style={{ left: leftOf(1294), top: topOf(667) }}>1</span>

      <Legend />

      <div className="absolute top-3 right-0 flex h-[26px] items-center text-[17px] font-semibold text-white">
        <span className="flex h-full w-[30px] items-center overflow-hidden rounded-l-sm bg-[#67a84f] pl-1.5">GC</span>
        <span className="flex h-full w-[52px] items-center justify-center bg-[#1f2d66]">Hoch</span>
      </div>
      <span className="absolute right-0 flex h-[26px] w-[43px] -translate-y-1/2 items-center justify-center rounded-l-sm bg-[#1f2d66] text-[17px] font-semibold text-white" style={{ top: topOf(1281) }}>Tief</span>

      <svg viewBox="0 0 44 23" className="absolute bottom-[20px] left-[13px] h-[23px] w-[44px]" fill="#dcdcdc" aria-hidden="true">
        <path d="M0 0h18v23H9V9H0zM33 0h11L34 23H24z" />
        <circle cx="25" cy="4.500" r="4.500" />
      </svg>
    </div>
  );
}

function PriceAxis() {
  return (
    <div className="relative w-32 shrink-0 overflow-hidden border-l border-[#2e2e2e] text-[17px] text-[#b1b1b6]">
      {ticks.map((p) => (
        <span key={p} className="absolute left-3 -translate-y-1/2 leading-6" style={{ top: topOf(priceY(p)) }}>{fmt(p)}</span>
      ))}
      {tags.map((t) => (
        <span key={t.price} className={clsx('absolute left-0 flex h-[26px] w-[124px] -translate-y-1/2 items-center rounded-r-sm pl-3', t.cls)} style={{ top: topOf(priceY(t.price) + 1) }}>
          {fmt(t.price)}
        </span>
      ))}
      <span className="absolute left-0 flex h-8 w-[124px] -translate-y-1/2 items-center rounded-r-sm bg-[#3b3c48] pl-3 font-semibold text-white" style={{ top: topOf(1293) }}>3.865,001396</span>

      <div className="absolute top-[3px] left-[5px] flex h-[72px] w-[119px] flex-col rounded-md border border-[#3d3d3d] bg-[#0f0f0f] text-[#dbdbdb]">
        {[['Währung', 'USD'], ['Einheit', 'apoz']].map(([label, value]) => (
          <label key={value} className="relative flex flex-1 items-center">
            <select aria-label={label} defaultValue={value} className="h-full w-full appearance-none bg-transparent pl-[5px] text-[17px]">
              <option>{value}</option>
            </select>
            <svg viewBox="0 0 10 8" className="absolute right-1 h-2 w-2.5" fill="none" stroke="currentColor" strokeWidth="2" aria-hidden="true">
              <path d="M1 2l4 4 4-4" />
            </svg>
          </label>
        ))}
      </div>

      <div className="absolute bottom-[6px] left-[33px] flex gap-1.5 text-lg font-medium text-[#dbdbdb]">
        <button className="h-[31px] w-[29px] rounded-md border border-[#3d3d3d] bg-black">A</button>
        <button className="h-[31px] w-[29px] rounded-md border border-[#3d3d3d] bg-black">L</button>
      </div>
    </div>
  );
}

function TimeAxis() {
  return (
    <div className="flex h-[38px] shrink-0 border-t border-[#2e2e2e]">
      <div className="relative min-w-0 flex-1 overflow-hidden text-[17px] text-[#b1b1b6]">
        {hours.map((h, i) => h && (
          <span key={i} className="absolute top-2 -translate-x-1/2 leading-6" style={{ left: leftOf(108 + i * 87.9) }}>{h}</span>
        ))}
        <span className="absolute top-0 flex h-[35px] w-[225px] -translate-x-1/2 items-center justify-center rounded-b-sm bg-[#3b3c48] pt-1 font-medium whitespace-pre text-white" style={{ left: leftOf(1617) }}>
          {'Mo 06-10-2025   01:10:00'}
        </span>
      </div>
      <button aria-label="Chart-Einstellungen" className="flex w-32 items-center justify-center border-l border-[#2e2e2e]">
        <Ico className="h-10 w-11">{icons.hexagon}</Ico>
      </button>
    </div>
  );
}

/* ---------- bottom ---------- */

function RangeBar() {
  return (
    <div className="flex h-14 shrink-0 items-center rounded-md bg-[#0f0f0f] pr-2 pl-5 text-[19px] font-medium">
      <nav className="flex gap-[18px]">
        {['1T', '5T', '1M', '3M', '6M', 'YTD', '1J', '5J', 'Alle'].map((r) => (
          <button key={r}>{r}</button>
        ))}
      </nav>
      <span className="w-4" />
      <Sep />
      <Tool name="goto" label="Gehe zu Datum" className="ml-3 w-11" />
      <button className="mr-[18px] ml-auto">06:42:55 UTC+2</button>
      <button className="mr-4">ETH</button>
      <Sep />
      <button className="mr-3 ml-4">b-adj</button>
      <button aria-label="Minimieren" className="flex h-[50px] w-[50px] items-center justify-center rounded-lg bg-[#3d3d3d]">
        <Ico>{icons.collapse}</Ico>
      </button>
    </div>
  );
}

function FloatingTools() {
  return (
    <div className="absolute top-[50px] left-[474px] flex h-[55px] w-[1092px] items-center rounded-lg bg-[#202020] shadow-[0_3px_8px_rgba(0,0,0,0.7)]">
      <span className="grid w-[35px] shrink-0 grid-cols-[3px_3px] place-content-center gap-1.5">
        {Array.from({ length: 6 }, (_, i) => (
          <span key={i} className="h-[3px] w-[3px] rounded-full bg-[#5c5c5c]" />
        ))}
      </span>
      {drawTools.map(([label, art]) => (
        <button key={label} aria-label={label} className="flex flex-1 justify-center">
          <Ico>{art}</Ico>
        </button>
      ))}
      {waveTools.map((w) => (
        <button key={w} aria-label={`Elliott-Welle ${w}`} className="flex flex-1 flex-col items-center">
          <span className="pl-2.5 text-xs leading-3 font-semibold whitespace-pre">{w.replace(' ', '    ')}</span>
          <svg viewBox="0 0 44 28" className="h-7 w-11" fill="none" stroke="currentColor" strokeWidth="1.7" aria-hidden="true">
            <path d="M8 16l6-8M18 8l6 8M28 16l7-8" />
            {dot(6, 19)}{dot(16, 6)}{dot(26, 19)}{dot(37, 6)}
          </svg>
        </button>
      ))}
      <button aria-label="Fadenkreuz" className="flex flex-1 justify-center text-[#4a5df5]">
        <Ico>{icons.cross}</Ico>
      </button>
    </div>
  );
}

function BottomPanel() {
  return (
    <div className="flex h-[99px] shrink-0 flex-col rounded-t-md bg-[#0f0f0f]">
      <div className="flex h-[57px] items-center border-b border-[#2e2e2e] pr-[5px] pl-[7px] text-[19px] font-medium">
        <button className="w-[132px]">Pine Editor</button>
        <button className="ml-4 h-[50px] w-[153px] rounded-lg bg-[#3d3d3d]">Trading-Panel</button>
        <Tool name="minimize" label="Panel minimieren" className="mr-2 ml-auto w-11" />
        <Tool name="maximize" label="Panel maximieren" className="w-11" />
      </div>
      <div className="flex flex-1 justify-end">
        <div className="w-[7px] border-l border-[#2e2e2e] pt-0.5">
          <div className="h-[23px] rounded-sm bg-[#4a4d5c]" />
        </div>
      </div>
    </div>
  );
}

export default function App() {
  return (
    <div className="flex h-screen flex-col bg-[#2e2e2e] font-['Noto_Sans','Open_Sans',sans-serif] text-lg leading-6 text-[#d6d6d6]">
      <TabBar />
      <Toolbar />
      <div className="mt-[5px] flex min-h-0 flex-1 gap-[7px] border-b-2 border-black">
        <LeftBar />
        <main className="flex min-w-0 flex-1 flex-col">
          <section className="flex min-h-0 flex-1 flex-col rounded-lg border-3 border-[#8b8b8b] bg-black">
            <div className="flex min-h-0 flex-1">
              <Pane />
              <PriceAxis />
            </div>
            <TimeAxis />
          </section>
          <div className="relative mt-px flex shrink-0 flex-col gap-[5px]">
            <RangeBar />
            <BottomPanel />
            <FloatingTools />
          </div>
        </main>
        <RightBar />
      </div>
    </div>
  );
}
